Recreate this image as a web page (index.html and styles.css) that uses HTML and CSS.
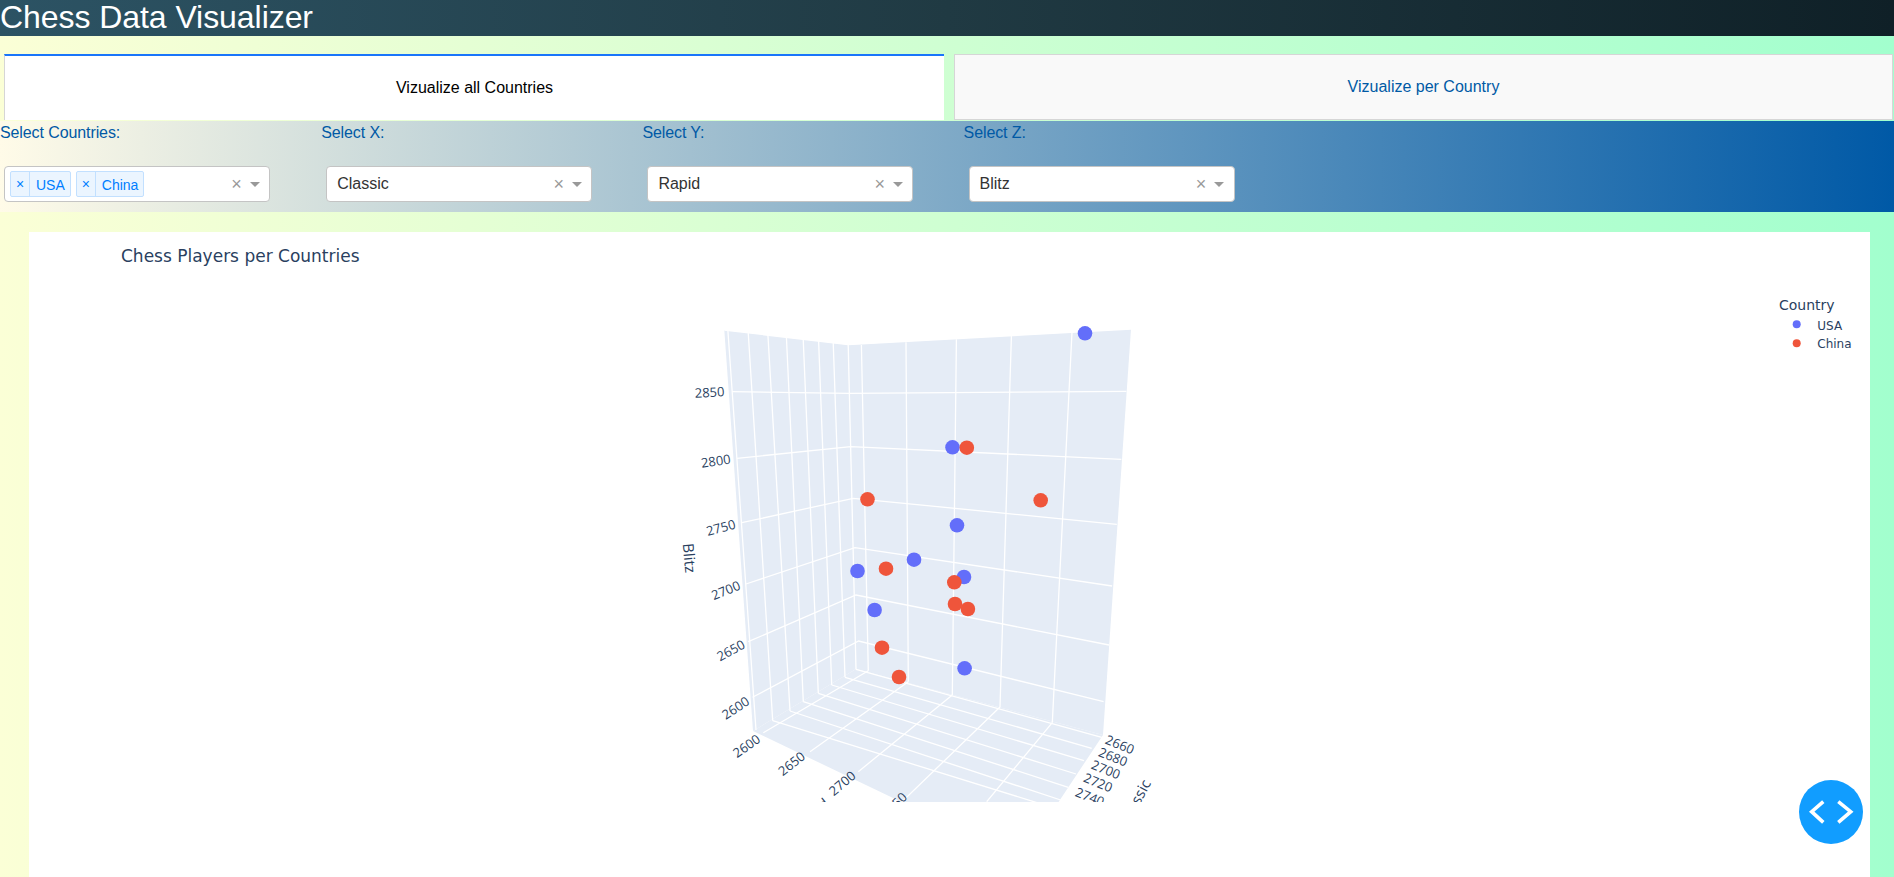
FILE: index.html
```html
<!DOCTYPE html>
<html lang="en">
<head>
<meta charset="utf-8">
<title>Chess Data Visualizer</title>
<link rel="stylesheet" href="styles.css">
</head>
<body>
<header class="app-header"><h1 class="app-title">Chess Data Visualizer</h1></header>

<nav class="tabs">
  <div class="tab tab-selected">Vizualize all Countries</div>
  <div class="tab tab-idle">Vizualize per Country</div>
</nav>

<section class="controls">
  <div class="control">
    <label class="control-label">Select Countries:</label>
    <div class="select select-first">
      <div class="select-value select-multi">
        <span class="chip"><span class="chip-x">×</span><span class="chip-label">USA</span></span>
        <span class="chip"><span class="chip-x">×</span><span class="chip-label">China</span></span>
      </div>
      <span class="select-clear">×</span><span class="select-arrow"></span>
    </div>
  </div>
  <div class="control">
    <label class="control-label">Select X:</label>
    <div class="select">
      <div class="select-value">Classic</div>
      <span class="select-clear">×</span><span class="select-arrow"></span>
    </div>
  </div>
  <div class="control">
    <label class="control-label">Select Y:</label>
    <div class="select">
      <div class="select-value">Rapid</div>
      <span class="select-clear">×</span><span class="select-arrow"></span>
    </div>
  </div>
  <div class="control">
    <label class="control-label">Select Z:</label>
    <div class="select">
      <div class="select-value">Blitz</div>
      <span class="select-clear">×</span><span class="select-arrow"></span>
    </div>
  </div>
</section>

<main class="chart-card">
  <svg class="chart" viewBox="29 232 1841 645" xmlns="http://www.w3.org/2000/svg">
    <defs>
      <clipPath id="scene-clip"><rect x="600" y="300" width="620" height="502"/></clipPath>
    </defs>
    <text class="chart-title" x="121" y="262">Chess Players per Countries</text>

    <g clip-path="url(#scene-clip)">
      <polygon class="wall" points="724.3,330 848,344.7 856,669 753,731"/>
      <polygon class="wall" points="848,344.7 1131,329 1103,735 856,669"/>
      <polygon class="wall" points="753,731 856,669 1103,735 1040,830 960,830"/>

      <g class="grid">
        <!-- left wall verticals -->
        <path d="M727.9 330.7L756 730M748.2 332.3L772.7 720.7M767.9 334.7L790 711M786.4 336.7L803.3 701.7M803.2 339L818.3 693.3M818.6 340.7L831.7 685M833.2 342.3L845 677.3M848.2 344.7L856 669.3"/>
        <!-- right wall verticals -->
        <path d="M861.4 345L868.3 670.7M906 342.3L908.3 681.7M956.4 339.3L952.3 695M1011.4 336L1000 707M1072 332.3L1052.3 722.7"/>
        <!-- horizontals around the two walls -->
        <path d="M732.1 391.7L849 393.3L1126.4 391.3M737.1 458.3L850.7 446.7L1121.4 459.3M741.8 522.7L853.2 498.3L1116.8 524.3M746 584L855 547.7L1112.1 586M748.2 641.7L856 595L1109 645M752.5 697.3L858.6 641L1103.6 701.7"/>
        <!-- floor -->
        <path d="M856 669.3L1101.7 737.3M845 677.3L1091.7 748.3M831.7 685L1084 760.7M818.3 693.3L1076 774M803.3 701.7L1068.3 787.3M790 711L1060.7 800M772.7 720.7L1050 806.7"/>
        <path d="M868.3 670.7L763.3 732.7M908.3 681.7L810 751.7M952.3 695L858.3 771.7M1000 707L902 801.7M1052.3 722.7L986.7 801.7"/>
        <!-- walls top and outer edges -->
        <path d="M724.3 330L848 344.7L1131 329"/>
      </g>

      <g class="ticks">
        <text transform="translate(709.6 392) rotate(-3)">2850</text>
        <text transform="translate(715.7 460.7) rotate(-8)">2800</text>
        <text transform="translate(720.7 527.3) rotate(-15)">2750</text>
        <text transform="translate(725.7 590) rotate(-22)">2700</text>
        <text transform="translate(730.7 650) rotate(-28)">2650</text>
        <text transform="translate(735.4 707.7) rotate(-33)">2600</text>

        <text transform="translate(746.4 745.7) rotate(-35)">2600</text>
        <text transform="translate(791.4 763.3) rotate(-38)">2650</text>
        <text transform="translate(842 783) rotate(-40)">2700</text>
        <text transform="translate(894 805) rotate(-45)">2750</text>

        <text transform="translate(1120 744.3) rotate(22)">2660</text>
        <text transform="translate(1113.2 756.7) rotate(22)">2680</text>
        <text transform="translate(1106 769.3) rotate(22)">2700</text>
        <text transform="translate(1098.2 782.3) rotate(22)">2720</text>
        <text transform="translate(1090 796.7) rotate(22)">2740</text>
      </g>
      <g class="axis-titles">
        <text transform="translate(690 558) rotate(85)">Blitz</text>
        <text transform="translate(811 813) rotate(-38)">Rapid</text>
        <text transform="translate(1135 801) rotate(-62)">Classic</text>
      </g>

      <g class="dots-usa">
        <circle cx="1085" cy="333.3" r="7.3"/>
        <circle cx="952.5" cy="447.3" r="7.3"/>
        <circle cx="957" cy="525.3" r="7.3"/>
        <circle cx="914" cy="559.7" r="7.3"/>
        <circle cx="857.5" cy="571" r="7.3"/>
        <circle cx="964" cy="577" r="7.3"/>
        <circle cx="874.6" cy="610" r="7.3"/>
        <circle cx="964.6" cy="668.3" r="7.3"/>
      </g>
      <g class="dots-china">
        <circle cx="966.8" cy="447.7" r="7.3"/>
        <circle cx="867.5" cy="499.3" r="7.3"/>
        <circle cx="1040.7" cy="500.3" r="7.3"/>
        <circle cx="886" cy="568.7" r="7.3"/>
        <circle cx="954.3" cy="582.3" r="7.3"/>
        <circle cx="955" cy="604" r="7.3"/>
        <circle cx="967.9" cy="609" r="7.3"/>
        <circle cx="882" cy="647.7" r="7.3"/>
        <circle cx="899" cy="677" r="7.3"/>
      </g>
    </g>

    <g class="legend">
      <text class="legend-title" x="1779" y="310">Country</text>
      <circle class="legend-usa" cx="1796.7" cy="324.3" r="4"/>
      <text x="1817.3" y="329.5">USA</text>
      <circle class="legend-china" cx="1796.7" cy="343.3" r="4"/>
      <text x="1817.3" y="348">China</text>
    </g>
  </svg>
</main>

<button class="debug-fab" type="button" aria-label="Toggle debug tools">
  <svg class="debug-icon" viewBox="0 0 64 64" xmlns="http://www.w3.org/2000/svg">
    <path d="M24.3 21.7L12.7 31.7L24.3 42.3"/>
    <path d="M39.3 21.7L51.7 31.7L39.3 42.3"/>
  </svg>
</button>
</body>
</html>
```
FILE: styles.css
```css
* { box-sizing: border-box; }

html, body {
  margin: 0;
  height: 877px;
  overflow: hidden;
}

body {
  display: flex;
  flex-direction: column;
  font-family: "Liberation Sans", Arial, sans-serif;
  font-size: 16px;
  background: linear-gradient(to right, #fbffd6, #a2ffce);
}

.app-header {
  height: 36px;
  flex: none;
  background: linear-gradient(to right, #2c5364, #203a43, #0f2027);
}

.app-title {
  margin: 0;
  font-size: 32px;
  font-weight: 400;
  line-height: 34px;
  letter-spacing: -0.06px;
  color: #fff;
}

.tabs {
  display: flex;
  flex: none;
  gap: 10px;
  height: 66px;
  margin: 18px 1px 0 4px;
}

.tab {
  display: flex;
  align-items: center;
  justify-content: center;
}

.tab-selected {
  flex: none;
  width: 940px;
  background: #fff;
  border-left: 1px solid #d6d6d6;
  border-top: 2px solid #1975fa;
  color: #000;
}

.tab-idle {
  flex: 1;
  background: #f9f9f9;
  border: 1px solid #d6d6d6;
  color: #0059a5;
}

.controls {
  display: grid;
  flex: none;
  grid-template-columns: repeat(4, 321.2px);
  height: 91px;
  margin-top: 1px;
  background: linear-gradient(to right, #fffbe8, #0059a6);
}

.control {
  display: flex;
  flex-direction: column;
  padding-top: 3px;
}

.control-label {
  height: 42px;
  line-height: 18px;
  letter-spacing: -0.1px;
  color: #0059a5;
}

.select {
  display: flex;
  align-items: center;
  width: 266px;
  height: 36px;
  margin-left: 5px;
  padding-right: 9.5px;
  background: #fff;
  border: 1px solid #c4c4c4;
  border-radius: 4px;
  color: #333;
}

.select-first { margin-left: 4px; }

.select-value {
  flex: 1;
  padding-left: 10px;
}

.select-multi {
  display: flex;
  gap: 5px;
  padding-left: 5px;
}

.chip {
  display: flex;
  height: 26px;
  font-size: 14px;
  line-height: 24px;
  color: #007eff;
  background: #ebf5ff;
  border: 1px solid #c2e0ff;
  border-radius: 2px;
}

.chip-x {
  width: 19px;
  text-align: center;
  border-right: 1px solid #c2e0ff;
}

.chip-label { padding: 1px 5px 0 6px; }

.select-clear {
  width: 17px;
  margin-right: 4.5px;
  font-size: 18px;
  line-height: 18px;
  text-align: center;
  color: #999;
}

.select-arrow {
  width: 0;
  height: 0;
  border-style: solid;
  border-width: 5px 5px 0;
  border-color: #999 transparent transparent;
}

.chart-card {
  flex: 1;
  margin: 20px 24px 0 29px;
  background: #fff;
}

.chart {
  display: block;
  width: 1841px;
  height: 645px;
  font-family: "DejaVu Sans", Verdana, sans-serif;
  fill: #2a3f5f;
}

.chart-title { font-size: 17px; }

.wall { fill: #e5ecf6; }

.grid path {
  fill: none;
  stroke: #fff;
  stroke-width: 1.3;
}

.ticks text {
  font-family: "Open Sans", sans-serif;
  font-size: 13px;
  text-anchor: middle;
  dominant-baseline: central;
}

.axis-titles text {
  font-family: "Open Sans", sans-serif;
  font-size: 15px;
  text-anchor: middle;
  dominant-baseline: central;
}

.dots-usa, .legend-usa { fill: #636efa; }
.dots-china, .legend-china { fill: #ef553b; }

.legend text { font-size: 12px; }
.legend .legend-title { font-size: 14px; }

.debug-fab {
  position: fixed;
  left: 1799px;
  top: 780px;
  width: 64px;
  height: 64px;
  padding: 0;
  border: 0;
  border-radius: 50%;
  background: #119dff;
}

.debug-icon {
  display: block;
  width: 64px;
  height: 64px;
}

.debug-icon path {
  fill: none;
  stroke: #fff;
  stroke-width: 3.6;
}
```
